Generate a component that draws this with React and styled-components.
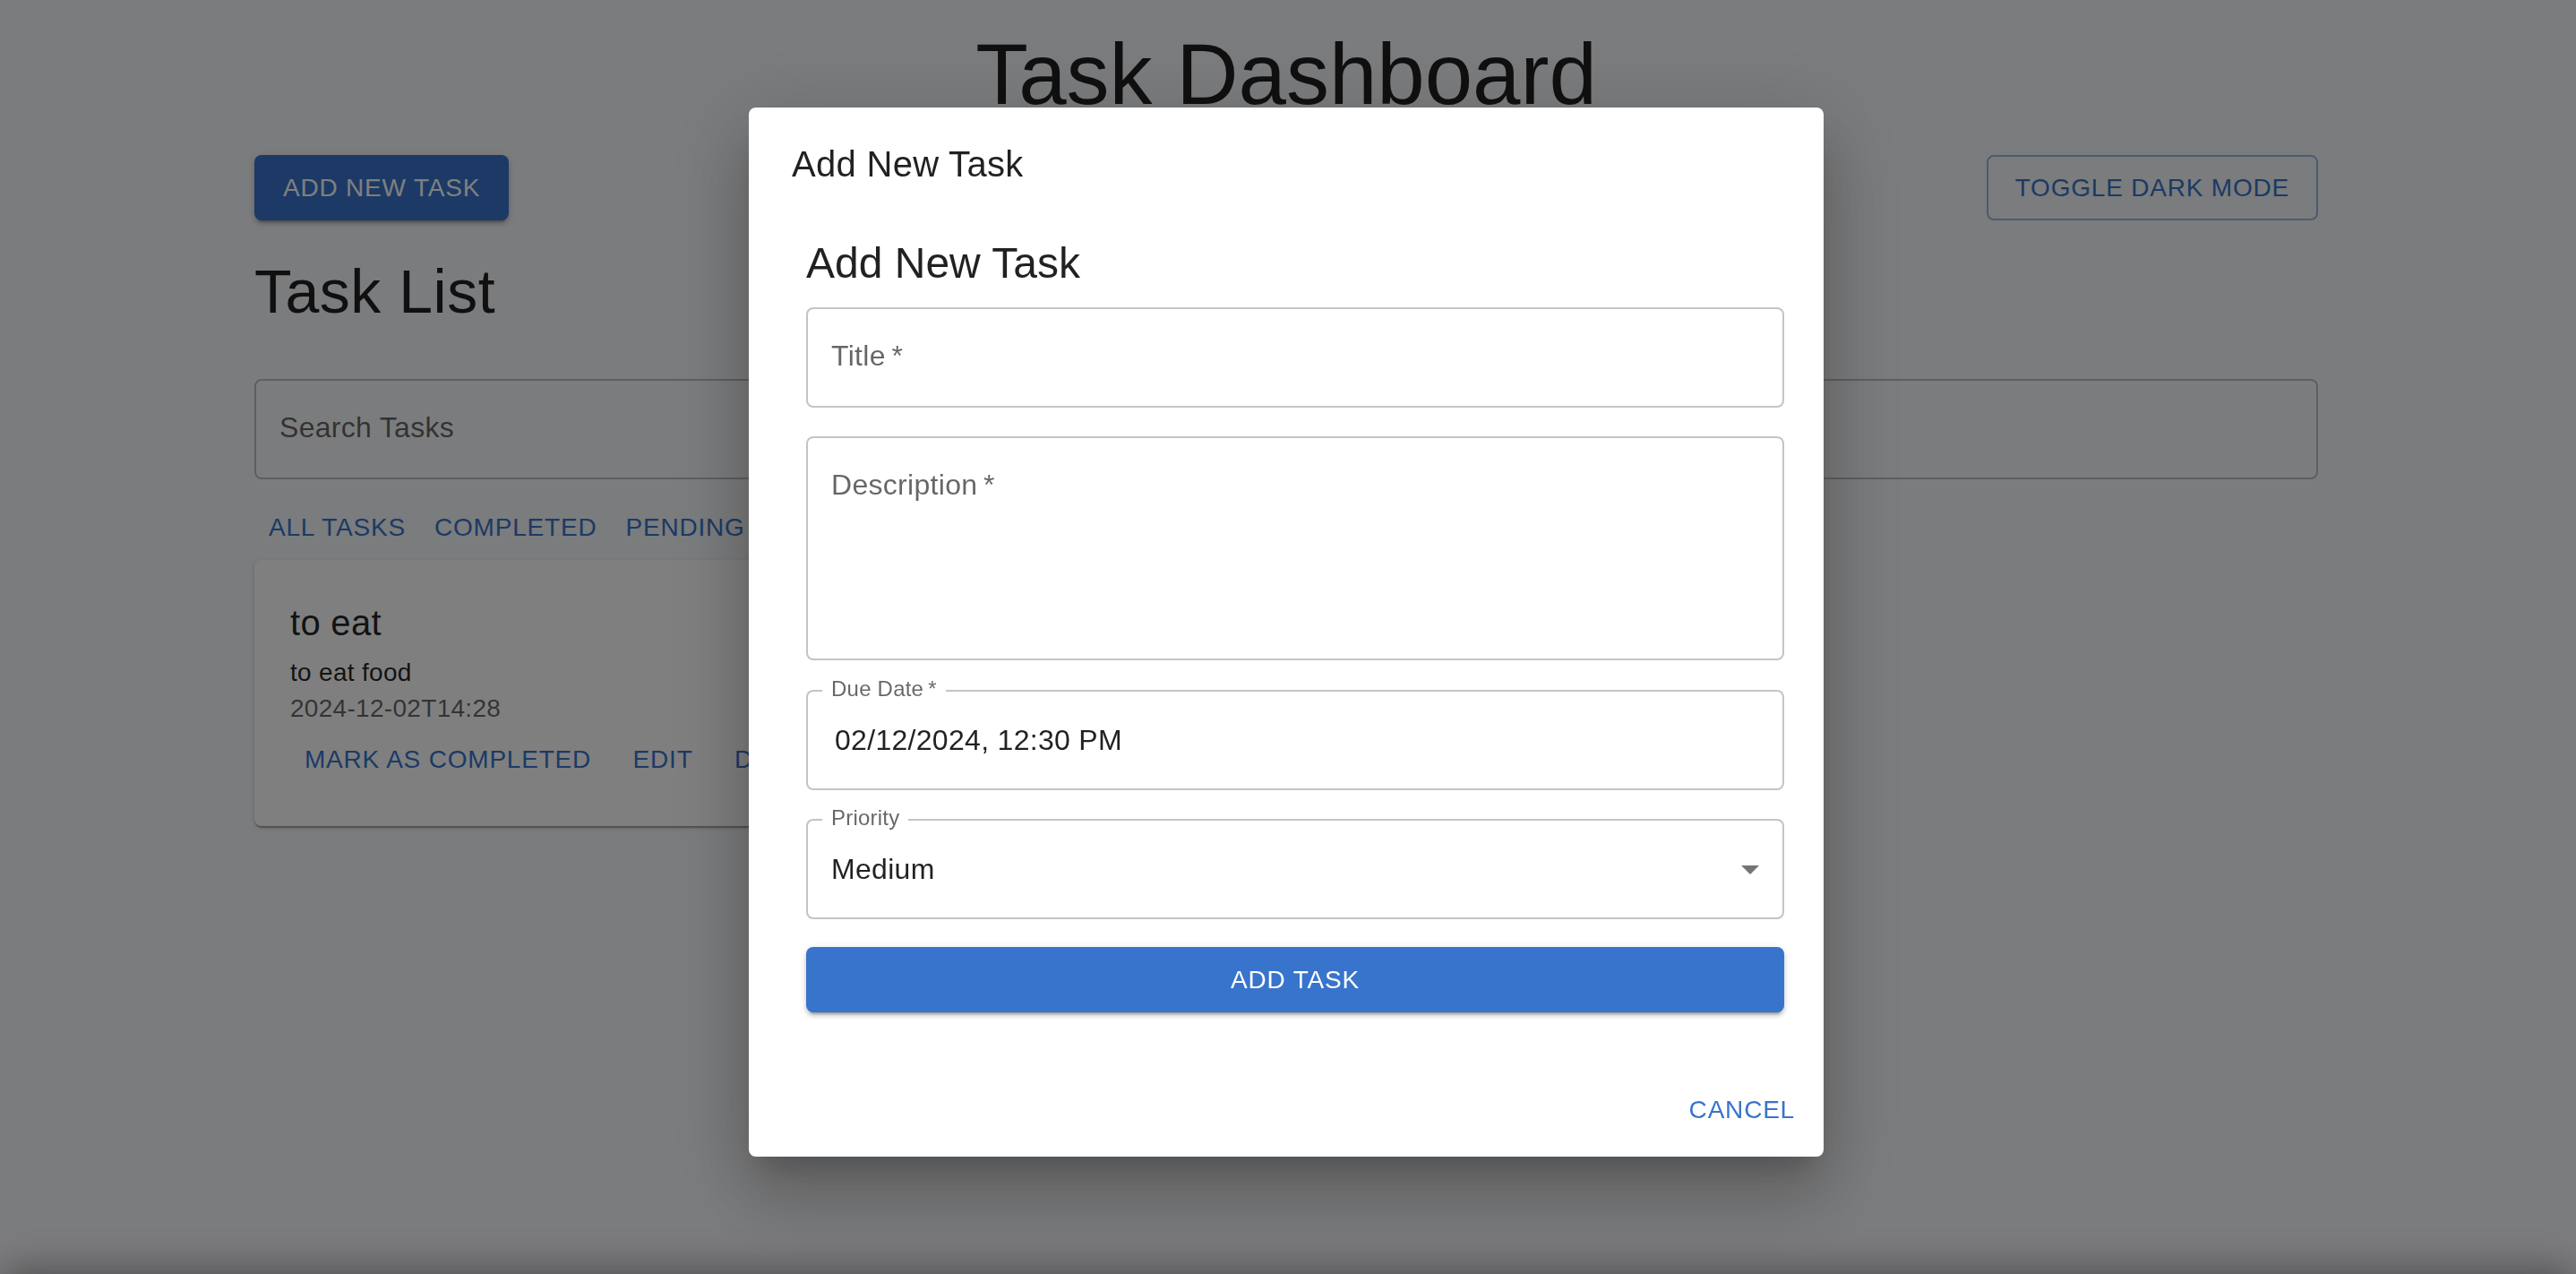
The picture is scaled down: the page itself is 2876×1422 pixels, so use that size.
import React from "react";
import styled, { createGlobalStyle, css } from "styled-components";

const BLUE = "#3874cb";
const TEXT = "rgba(0,0,0,0.87)";
const MUTED = "rgba(0,0,0,0.6)";
const LINE = "rgba(0,0,0,0.23)";

const GlobalStyle = createGlobalStyle`
  html, body { margin: 0; padding: 0; }
  body {
    background: #f7f8fb;
    font-family: "Liberation Sans", Arial, Helvetica, sans-serif;
    color: ${TEXT};
  }
  * { box-sizing: border-box; }
`;

const Main = styled.main`
  min-height: 100vh;
  padding: 27px 0 40px;
`;

const Container = styled.div`
  max-width: 2400px;
  margin: 0 auto;
  padding: 0 50px 0 46px;
`;

const PageTitle = styled.h1`
  margin: 0 0 34px;
  font-size: 96px;
  font-weight: 400;
  line-height: 1.167;
  text-align: center;
  color: ${TEXT};
`;

const HeaderRow = styled.div`
  display: flex;
  justify-content: space-between;
  align-items: center;
  margin-bottom: 38px;
`;

const Button = styled.button`
  font-family: inherit;
  font-size: 28px;
  font-weight: 500;
  line-height: 1.75;
  letter-spacing: 0.02857em;
  text-transform: uppercase;
  min-width: 128px;
  border-radius: 8px;
  cursor: pointer;
  white-space: nowrap;
  ${({ $variant }) =>
    $variant === "contained"
      ? css`
          padding: 12px 32px;
          border: 0;
          background: ${BLUE};
          color: #fff;
          box-shadow: 0 6px 2px -4px rgba(0,0,0,0.2), 0 4px 4px 0 rgba(0,0,0,0.14), 0 2px 10px 0 rgba(0,0,0,0.12);
        `
      : $variant === "outlined"
      ? css`
          padding: 10px 30px;
          border: 2px solid rgba(56,116,203,0.5);
          background: transparent;
          color: ${BLUE};
        `
      : css`
          padding: 12px 16px;
          border: 0;
          background: transparent;
          color: ${BLUE};
        `}
  ${({ $full }) => $full && css`width: 100%;`}
`;

const SectionTitle = styled.h2`
  margin: 0;
  font-size: 68px;
  font-weight: 400;
  line-height: 1.235;
  letter-spacing: 0.00735em;
`;

const Field = styled.div`
  position: relative;
  display: flex;
  align-items: ${({ $multiline }) => ($multiline ? "flex-start" : "center")};
  height: ${({ $height }) => $height || 112}px;
  padding: ${({ $multiline }) => ($multiline ? "29px 26px 0" : "0 12px 0 26px")};
  border: 2px solid ${LINE};
  border-radius: 8px;
  background: ${({ $bg }) => $bg || "#fff"};
`;

const FieldText = styled.span`
  flex: 1;
  font-size: 32px;
  line-height: 46px;
  letter-spacing: 0.00938em;
  color: ${({ $muted }) => ($muted ? MUTED : TEXT)};
  padding-left: ${({ $inset }) => $inset || 0}px;
  padding-bottom: ${({ $muted }) => ($muted ? 4 : 0)}px;
`;

const FloatLabel = styled.span`
  position: absolute;
  top: -15px;
  left: 16px;
  padding: 0 10px;
  background: #fff;
  font-size: 24px;
  line-height: 24px;
  letter-spacing: 0.00938em;
  color: ${MUTED};
`;

const SearchWrap = styled.div`
  margin: 55px 0 17px;
`;

const FilterRow = styled.div`
  display: flex;
`;

const TaskGrid = styled.div`
  display: grid;
  grid-template-columns: repeat(3, 1fr);
  gap: 32px;
`;

const Card = styled.div`
  background: #fff;
  border-radius: 8px;
  padding: 38px 40px 38px;
  box-shadow: 0 4px 2px -2px rgba(0,0,0,0.2), 0 2px 2px 0 rgba(0,0,0,0.14), 0 2px 6px 0 rgba(0,0,0,0.12);
`;

const CardTitle = styled.div`
  font-size: 40px;
  font-weight: 500;
  line-height: 1.6;
  letter-spacing: 0.0075em;
  margin-bottom: 4px;
`;

const CardText = styled.div`
  font-size: 28px;
  line-height: 40px;
  letter-spacing: 0.01071em;
  color: ${({ $muted }) => ($muted ? MUTED : TEXT)};
`;

const CardActions = styled.div`
  display: flex;
`;

const Footer = styled.footer`
  height: 120px;
  background: ${BLUE};
  border-radius: 24px 24px 0 0;
  box-shadow: 0 -6px 40px rgba(0,0,0,0.35);
`;

const Overlay = styled.div`
  position: fixed;
  inset: 0;
  background: rgba(0,0,0,0.5);
  display: flex;
  justify-content: center;
  align-items: flex-start;
  padding: 120px 4px 0 0;
`;

const Dialog = styled.div`
  width: 1200px;
  background: #fff;
  border-radius: 8px;
  display: flex;
  flex-direction: column;
  box-shadow: 0 22px 30px -14px rgba(0,0,0,0.2), 0 48px 76px 6px rgba(0,0,0,0.14), 0 18px 92px 16px rgba(0,0,0,0.12);
`;

const DialogTitle = styled.h2`
  margin: 0;
  padding: 31px 48px 32px;
  font-size: 40px;
  font-weight: 500;
  line-height: 1.6;
  letter-spacing: 0.0075em;
`;

const DialogContent = styled.div`
  padding: 0 44px 40px 64px;
`;

const Form = styled.form`
  display: flex;
  flex-direction: column;
  padding-bottom: 16px;
`;

const FormHeading = styled.h3`
  margin: 15px 0 0;
  font-size: 48px;
  font-weight: 400;
  line-height: 1.334;
`;

const FormRow = styled.div`
  margin-top: ${({ $gap }) => $gap}px;
`;

const DialogActions = styled.div`
  display: flex;
  justify-content: flex-end;
  padding: 16px;
`;

const Caret = () => (
  <svg width="48" height="48" viewBox="0 0 24 24" fill="rgba(0,0,0,0.54)">
    <path d="M7 10l5 5 5-5z" />
  </svg>
);

export default function App() {
  return (
    <>
      <GlobalStyle />
      <Main>
        <Container>
          <PageTitle>Task Dashboard</PageTitle>
          <HeaderRow>
            <Button $variant="contained">Add New Task</Button>
            <Button $variant="outlined">Toggle Dark Mode</Button>
          </HeaderRow>
          <SectionTitle>Task List</SectionTitle>
          <SearchWrap>
            <Field $bg="transparent">
              <FieldText $muted>Search Tasks</FieldText>
            </Field>
          </SearchWrap>
          <FilterRow>
            <Button>All Tasks</Button>
            <Button>Completed</Button>
            <Button>Pending</Button>
          </FilterRow>
          <TaskGrid>
            <Card>
              <CardTitle>to eat</CardTitle>
              <CardText>to eat food</CardText>
              <CardText $muted>2024-12-02T14:28</CardText>
              <CardActions>
                <Button>Mark as Completed</Button>
                <Button>Edit</Button>
                <Button>Delete</Button>
              </CardActions>
            </Card>
          </TaskGrid>
        </Container>
      </Main>
      <Footer />

      <Overlay>
        <Dialog>
          <DialogTitle>Add New Task</DialogTitle>
          <DialogContent>
            <Form>
              <FormHeading>Add New Task</FormHeading>
              <FormRow $gap={17}>
                <Field>
                  <FieldText $muted>Title&thinsp;*</FieldText>
                </Field>
              </FormRow>
              <FormRow $gap={32}>
                <Field $multiline $height={250}>
                  <FieldText $muted>Description&thinsp;*</FieldText>
                </Field>
              </FormRow>
              <FormRow $gap={33}>
                <Field>
                  <FloatLabel>Due Date&thinsp;*</FloatLabel>
                  <FieldText $inset={4}>02/12/2024, 12:30 PM</FieldText>
                </Field>
              </FormRow>
              <FormRow $gap={32}>
                <Field>
                  <FloatLabel>Priority</FloatLabel>
                  <FieldText>Medium</FieldText>
                  <Caret />
                </Field>
              </FormRow>
              <FormRow $gap={31}>
                <Button $variant="contained" $full type="button">Add Task</Button>
              </FormRow>
            </Form>
          </DialogContent>
          <DialogActions>
            <Button>Cancel</Button>
          </DialogActions>
        </Dialog>
      </Overlay>
    </>
  );
}
